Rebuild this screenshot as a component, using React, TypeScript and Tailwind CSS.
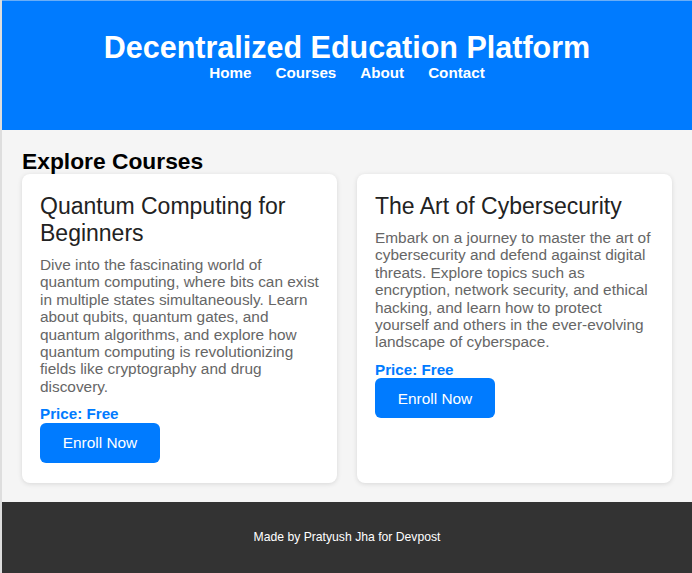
import React from "react";

interface Course {
  title: string;
  description: string;
  price: string;
}

const courses: Course[] = [
  {
    title: "Quantum Computing for Beginners",
    description:
      "Dive into the fascinating world of quantum computing, where bits can exist in multiple states simultaneously. Learn about qubits, quantum gates, and quantum algorithms, and explore how quantum computing is revolutionizing fields like cryptography and drug discovery.",
    price: "Free",
  },
  {
    title: "The Art of Cybersecurity",
    description:
      "Embark on a journey to master the art of cybersecurity and defend against digital threats. Explore topics such as encryption, network security, and ethical hacking, and learn how to protect yourself and others in the ever-evolving landscape of cyberspace.",
    price: "Free",
  },
];

const navLinks = ["Home", "Courses", "About", "Contact"];

const CourseCard: React.FC<{ course: Course }> = ({ course }) => (
  <div className="bg-white rounded-[8px] shadow-[0_1px_5px_rgba(0,0,0,0.12)] pt-[19px] px-[18px] pb-[20px]">
    <h3 className="text-[23px] leading-[27px] text-[#222] font-normal mb-[9px]">
      {course.title}
    </h3>
    <p className="text-[15.4px] leading-[17.4px] text-[#666]">{course.description}</p>
    <p className="mt-[10px] text-[15.2px] leading-[17.5px] font-bold text-[#007bff]">
      Price: {course.price}
    </p>
    <button className="w-[120px] h-[40px] rounded-[6px] bg-[#007bff] text-white text-[15.4px] flex items-center justify-center">
      Enroll Now
    </button>
  </div>
);

export default function App() {
  return (
    <div
      className="border-l-2 border-[#dedede] bg-[#f5f5f5]"
      style={{ fontFamily: '"Liberation Sans", Arial, sans-serif' }}
    >
      {/* Header */}
      <header className="h-[130px] bg-[#007bff] border-t border-[#6aaef7] text-white text-center pt-[29px]">
        <h1 className="text-[30.5px] leading-[34px] font-bold">Decentralized Education Platform</h1>
        <nav className="flex justify-center gap-[24px] text-[15.2px] leading-[17.5px] font-bold">
          {navLinks.map((link) => (
            <a key={link} href="#">
              {link}
            </a>
          ))}
        </nav>
      </header>

      {/* Courses */}
      <main className="px-[20px] pt-[18px] pb-[19px]">
        <h2 className="text-[22.8px] leading-[26px] font-bold text-black">Explore Courses</h2>
        <div className="grid grid-cols-2 gap-[20px]">
          {courses.map((course) => (
            <CourseCard key={course.title} course={course} />
          ))}
        </div>
      </main>

      {/* Footer */}
      <footer className="h-[71px] bg-[#333] text-white flex items-center justify-center text-[12.2px]">
        Made by Pratyush Jha for Devpost
      </footer>
    </div>
  );
}
